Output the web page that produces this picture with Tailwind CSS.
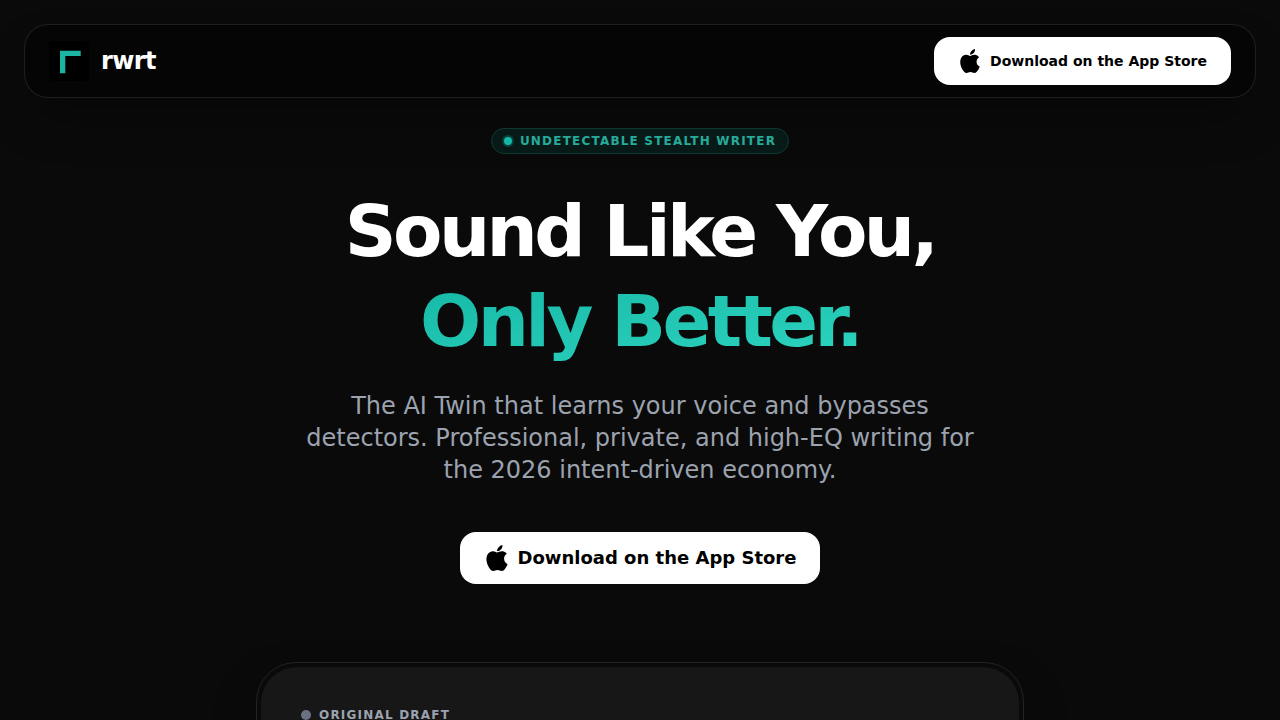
<!DOCTYPE html>
<html lang="en">
<head>
    <meta charset="UTF-8">
    <meta name="viewport" content="width=device-width, initial-scale=1.0">
    <title>rwrt - Sound Like You, Only Better.</title>
    <script src="https://cdn.jsdelivr.net/npm/@tailwindcss/browser@4"></script>
</head>
<body class="min-h-screen overflow-x-hidden bg-[#0a0a0a] font-['DejaVu_Sans',sans-serif] text-white">
    <!-- Navigation -->
    <header class="px-6 pt-6">
        <nav class="flex items-center justify-between rounded-3xl border border-white/10 bg-[#050505] px-6 py-3 shadow-2xl shadow-black/40">
            <a href="#" class="flex items-center gap-3">
                <svg class="size-10 rounded" viewBox="0 0 40 40" aria-hidden="true">
                    <rect width="40" height="40" fill="#000"/>
                    <path d="M11 9.8h20.7v5.2H16.3v17.3H11z" fill="#1cb5a3"/>
                </svg>
                <span class="text-2xl font-bold tracking-tight">rwrt</span>
            </a>
            <a href="#download" class="flex h-12 items-center gap-2 rounded-2xl bg-white px-6 text-sm font-bold text-black">
                <svg class="size-6" viewBox="0 0 24 24" fill="currentColor" aria-hidden="true">
                    <path d="M12.152 6.896c-.948 0-2.415-1.078-3.96-1.04-2.04.027-3.91 1.183-4.961 3.014-2.117 3.675-.546 9.103 1.519 12.09 1.013 1.454 2.208 3.09 3.792 3.039 1.52-.065 2.09-.987 3.935-.987 1.831 0 2.35.987 3.96.948 1.637-.026 2.676-1.48 3.676-2.948 1.156-1.688 1.636-3.325 1.662-3.415-.039-.013-3.182-1.221-3.22-4.857-.026-3.04 2.48-4.494 2.597-4.559-1.429-2.09-3.623-2.324-4.39-2.376-2-.156-3.675 1.09-4.61 1.09z"/>
                    <path d="M17 0c.3 1.7-.4 3.2-1.5 4.2-1 1-2.3 1.500-3.600 1.400.1-1.400.8-2.700 1.900-3.800C14.800.8 16 .1 17 0z"/>
                </svg>
                Download on the App Store
            </a>
        </nav>
    </header>

    <main class="flex flex-col items-center px-6 pt-[30px]">
        <!-- Hero -->
        <section class="flex flex-col items-center text-center">
            <div class="flex items-center gap-2 rounded-full border border-[#0c3a30] bg-[#081a18] px-3 py-1 text-xs font-bold tracking-widest text-[#26ab9b]">
                <span class="size-2 rounded-full bg-[#14b8a6] ring-2 ring-[#14b8a6]/25"></span>
                UNDETECTABLE STEALTH WRITER
            </div>
            <h1 class="mt-8 text-7xl/[90px] font-bold tracking-tighter">
                Sound Like You,<br>
                <span class="bg-gradient-to-br from-[#14b8a6] to-[#2dd4bf] bg-clip-text text-transparent">Only Better.</span>
            </h1>
            <p class="mt-6 max-w-2xl text-2xl text-[#9ca3af]">
                The AI Twin that learns your voice and bypasses detectors. Professional, private, and high-EQ writing for the 2026 intent-driven economy.
            </p>
            <a id="download" href="#download" class="mt-[46px] flex items-center gap-2 rounded-2xl bg-white px-6 py-3 text-lg font-bold text-black">
                <svg class="size-[26px]" viewBox="0 0 24 24" fill="currentColor" aria-hidden="true">
                    <path d="M12.152 6.896c-.948 0-2.415-1.078-3.96-1.04-2.04.027-3.91 1.183-4.961 3.014-2.117 3.675-.546 9.103 1.519 12.09 1.013 1.454 2.208 3.09 3.792 3.039 1.52-.065 2.09-.987 3.935-.987 1.831 0 2.35.987 3.96.948 1.637-.026 2.676-1.48 3.676-2.948 1.156-1.688 1.636-3.325 1.662-3.415-.039-.013-3.182-1.221-3.22-4.857-.026-3.04 2.48-4.494 2.597-4.559-1.429-2.09-3.623-2.324-4.39-2.376-2-.156-3.675 1.09-4.61 1.09z"/>
                    <path d="M17 0c.3 1.7-.4 3.2-1.5 4.2-1 1-2.3 1.500-3.600 1.400.1-1.400.8-2.700 1.900-3.800C14.800.8 16 .1 17 0z"/>
                </svg>
                Download on the App Store
            </a>
        </section>

        <!-- Demo card -->
        <section class="mt-[78px] w-full max-w-3xl rounded-[40px] border border-white/10 p-1 shadow-2xl shadow-black/50">
            <div class="rounded-[36px] bg-[#171717] p-10">
                <h2 class="flex items-center gap-2 text-xs font-bold tracking-widest text-[#9ca3af]">
                    <span class="size-[10px] rounded-full bg-gray-500"></span>
                    ORIGINAL DRAFT
                </h2>
            </div>
        </section>
    </main>
</body>
</html>
